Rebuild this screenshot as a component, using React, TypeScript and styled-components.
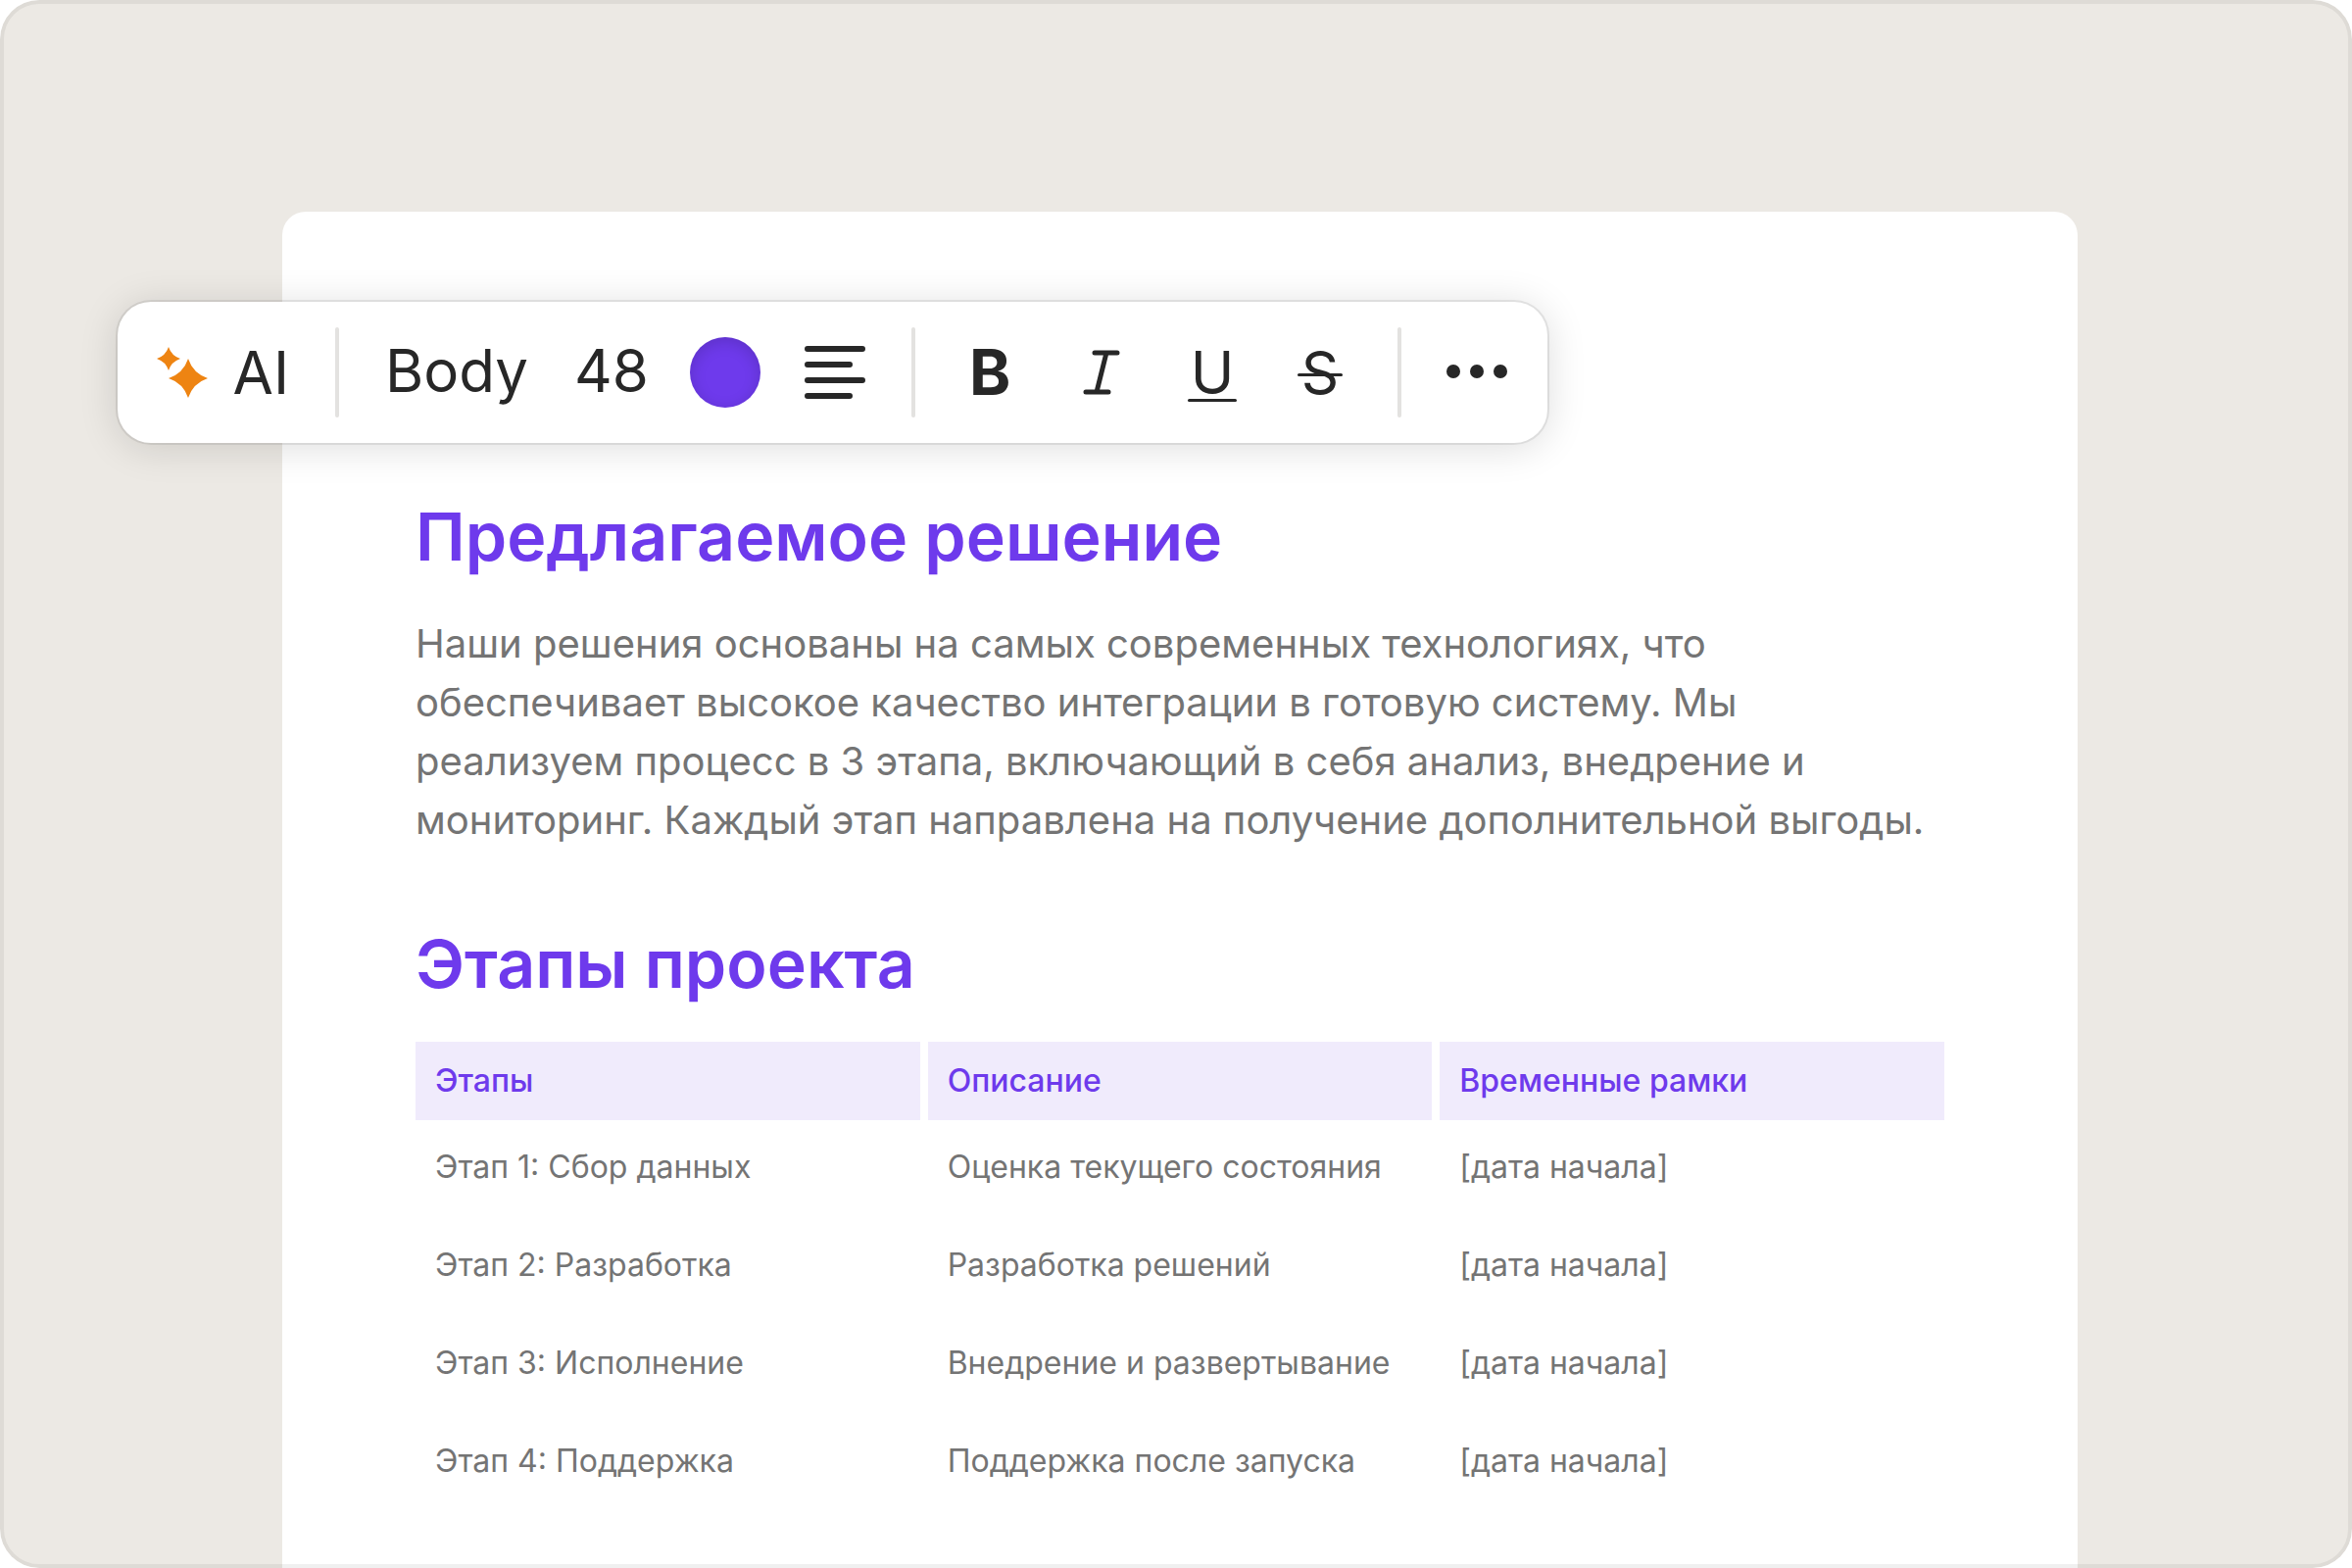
import React from "react";
import styled, { createGlobalStyle } from "styled-components";

const GlobalStyle = createGlobalStyle`
  *, *::before, *::after { box-sizing: border-box; }
  body { margin: 0; background: #ffffff; font-family: Inter, "Noto Sans", sans-serif; }
`;

const Stage = styled.main`
  position: relative;
  min-height: 100vh;
  display: flex;
  padding: 216px 280px 0 288px;
  background: #ece9e4;
  border-radius: 40px;
  overflow: hidden;

  &::after {
    content: "";
    position: absolute;
    inset: 0;
    border: 4px solid rgba(0, 0, 0, 0.06);
    border-radius: 40px;
    pointer-events: none;
  }
`;

const Sheet = styled.article`
  flex: 1;
  min-width: 0;
  padding: 291px 136px 40px;
  background: #ffffff;
  border-radius: 24px 24px 0 0;
`;

const Heading = styled.h2`
  margin: 0;
  font-size: 68px;
  line-height: 80px;
  font-weight: 600;
  color: #6e3aec;
`;

const Paragraph = styled.p`
  margin: 40px 0 76px;
  font-size: 40px;
  line-height: 60px;
  color: #747474;
`;

const StageTable = styled.table`
  table-layout: fixed;
  width: calc(100% + 16px);
  margin: 40px -8px 0;
  border-collapse: separate;
  border-spacing: 8px 0;
  font-size: 32px;
  line-height: 40px;
`;

const HeadCell = styled.th`
  padding: 20px;
  background: #f0ebfc;
  color: #6e3aec;
  font-weight: 500;
  text-align: left;
`;

const Cell = styled.td`
  padding: 28px 20px 32px;
  color: #747474;
`;

const Toolbar = styled.div`
  position: absolute;
  z-index: 1;
  top: 308px;
  left: 120px;
  display: flex;
  align-items: center;
  height: 144px;
  padding: 0 41px 0 40px;
  background: #ffffff;
  border-radius: 34px;
  box-shadow: 0 0 0 2px rgba(0, 0, 0, 0.08), 0 4px 40px rgba(0, 0, 0, 0.14);
`;

const ToolButton = styled.button<{ $width: number; $gap?: number }>`
  display: flex;
  align-items: center;
  justify-content: space-between;
  flex: none;
  width: ${(p) => p.$width}px;
  height: 92px;
  margin-left: ${(p) => p.$gap ?? 0}px;
  padding: 0;
  border: 0;
  background: none;
  color: #272727;
  font: 400 60px/72px Inter, "Noto Sans", sans-serif;
  cursor: pointer;
`;

const ValueButton = styled(ToolButton)`
  padding-bottom: 4px;
`;

const Divider = styled.span<{ $before: number; $after: number }>`
  flex: none;
  width: 4px;
  height: 92px;
  margin: 0 ${(p) => p.$after}px 0 ${(p) => p.$before}px;
  border-radius: 2px;
  background: #e3e2e0;
`;

const Swatch = styled.span`
  width: 72px;
  height: 72px;
  border-radius: 50%;
  background: #6e3aec;
  box-shadow: inset 0 4px 16px rgba(0, 0, 0, 0.16);
`;

const BoldMark = styled.strong`
  font-size: 64px;
  font-weight: 700;
`;

const Underlined = styled.span`
  position: relative;
  width: 50px;
  text-align: center;

  &::after {
    content: "";
    position: absolute;
    left: 0;
    right: 0;
    bottom: 6px;
    height: 3px;
    border-radius: 2px;
    background: currentColor;
  }
`;

const Struck = styled.span`
  position: relative;
  width: 46px;
  text-align: center;

  &::after {
    content: "";
    position: absolute;
    left: 0;
    right: 0;
    top: 37px;
    height: 3px;
    border-radius: 2px;
    background: currentColor;
  }
`;

const rows = [
  ["Этап 1: Сбор данных", "Оценка текущего состояния", "[дата начала]"],
  ["Этап 2: Разработка", "Разработка решений", "[дата начала]"],
  ["Этап 3: Исполнение", "Внедрение и развертывание", "[дата начала]"],
  ["Этап 4: Поддержка", "Поддержка после запуска", "[дата начала]"],
];

const Sparkles = () => (
  <svg width="52" height="52" viewBox="0 0 52 52" fill="#ee8412" aria-hidden="true">
    <path d="M12 0Q15 9 24 12Q15 15 12 24Q9 15 0 12Q9 9 12 0Z" />
    <path d="M32 12Q37 27 52 32Q37 37 32 52Q27 37 12 32Q27 27 32 12Z" />
  </svg>
);

const AlignLeft = () => (
  <svg width="62" height="54" viewBox="0 0 62 54" stroke="#272727" strokeWidth="6" strokeLinecap="round" aria-hidden="true">
    <path d="M3 3H59M3 19H46M3 35H59M3 51H46" />
  </svg>
);

const ItalicIcon = () => (
  <svg width="38" height="46" viewBox="0 0 38 46" fill="none" stroke="#272727" strokeWidth="5" strokeLinecap="round" aria-hidden="true">
    <path d="M12 3H35M3 43H26M24 3L14 43" />
  </svg>
);

const Dots = () => (
  <svg width="62" height="16" viewBox="0 0 62 16" fill="#272727" aria-hidden="true">
    <circle cx="7" cy="7" r="7" />
    <circle cx="31" cy="7" r="7" />
    <circle cx="55" cy="7" r="7" />
  </svg>
);

export default function App() {
  return (
    <>
      <GlobalStyle />
      <Stage>
        <Toolbar role="toolbar" aria-label="Форматирование">
          <ToolButton $width={135}>
            <Sparkles />
            <span>AI</span>
          </ToolButton>
          <Divider $before={47} $after={47} />
          <ValueButton $width={144}>Body</ValueButton>
          <ValueButton $width={76} $gap={49}>48</ValueButton>
          <ToolButton $width={72} $gap={42} aria-label="Цвет">
            <Swatch />
          </ToolButton>
          <ToolButton $width={62} $gap={45} aria-label="Выравнивание">
            <AlignLeft />
          </ToolButton>
          <Divider $before={47} $after={55} />
          <ToolButton $width={44} aria-label="Полужирный">
            <BoldMark>B</BoldMark>
          </ToolButton>
          <ToolButton $width={38} $gap={72} aria-label="Курсив">
            <ItalicIcon />
          </ToolButton>
          <ToolButton $width={50} $gap={69} aria-label="Подчёркнутый">
            <Underlined>U</Underlined>
          </ToolButton>
          <ToolButton $width={46} $gap={62} aria-label="Зачёркнутый">
            <Struck>S</Struck>
          </ToolButton>
          <Divider $before={56} $after={46} />
          <ToolButton $width={62} aria-label="Ещё">
            <Dots />
          </ToolButton>
        </Toolbar>
        <Sheet>
          <Heading>Предлагаемое решение</Heading>
          <Paragraph>
            Наши решения основаны на самых современных технологиях, что
            обеспечивает высокое качество интеграции в готовую систему. Мы
            реализуем процесс в 3 этапа, включающий в себя анализ, внедрение и
            мониторинг. Каждый этап направлена на получение дополнительной выгоды.
          </Paragraph>
          <Heading>Этапы проекта</Heading>
          <StageTable>
            <thead>
              <tr>
                <HeadCell scope="col">Этапы</HeadCell>
                <HeadCell scope="col">Описание</HeadCell>
                <HeadCell scope="col">Временные рамки</HeadCell>
              </tr>
            </thead>
            <tbody>
              {rows.map((row) => (
                <tr key={row[0]}>
                  {row.map((text) => (
                    <Cell key={text}>{text}</Cell>
                  ))}
                </tr>
              ))}
            </tbody>
          </StageTable>
        </Sheet>
      </Stage>
    </>
  );
}
